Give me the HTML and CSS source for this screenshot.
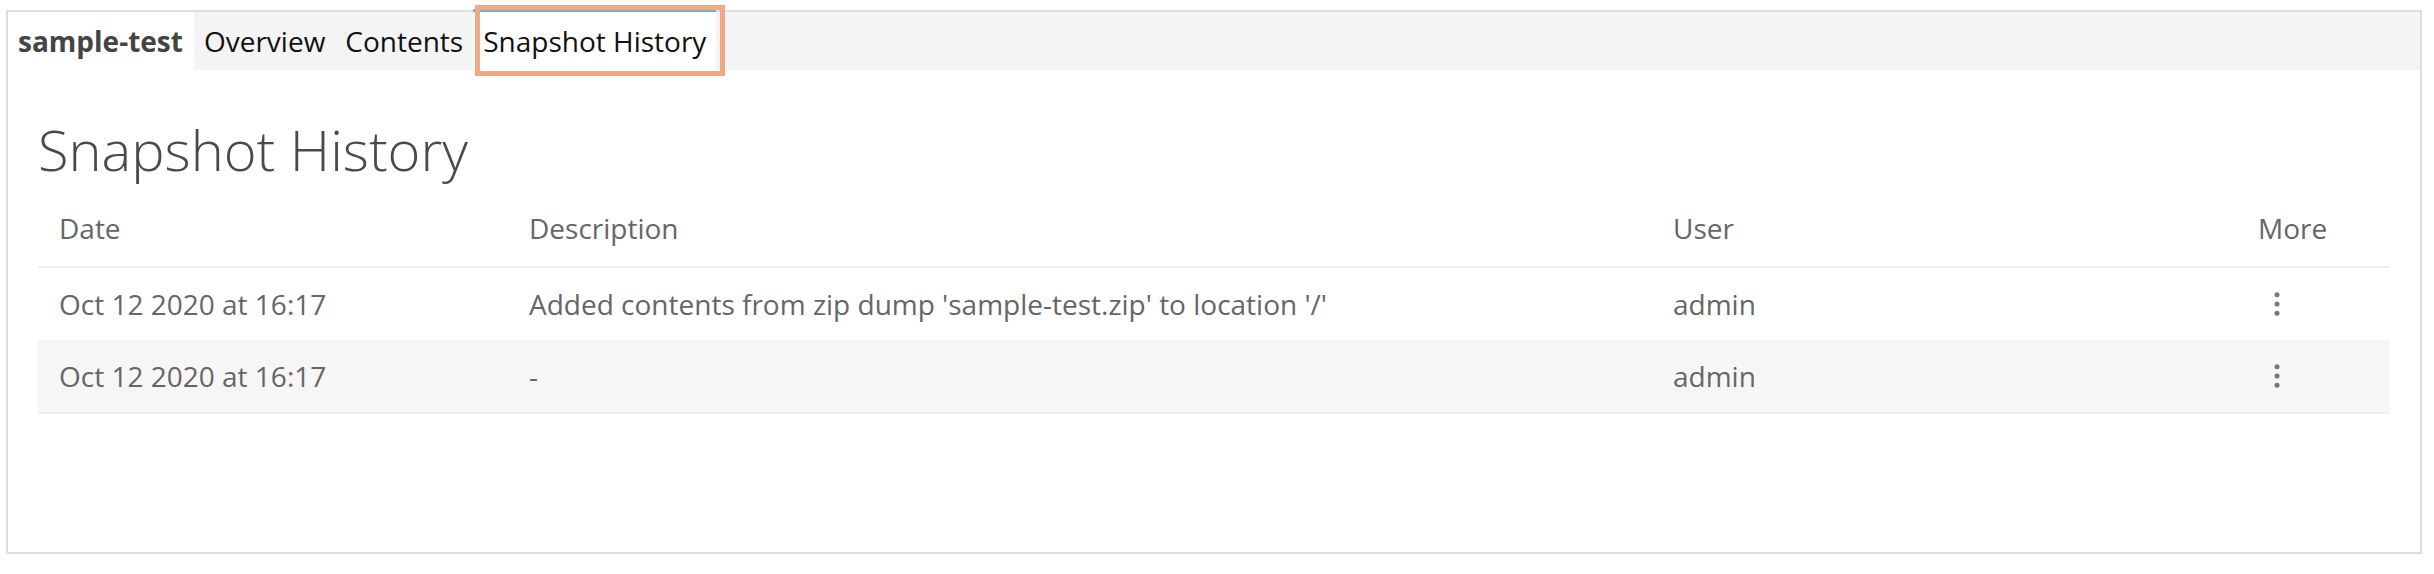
FILE: index.html
```html
<!DOCTYPE html>
<html lang="en">
<head>
<meta charset="utf-8">
<title>Snapshot History</title>
<link rel="stylesheet" href="styles.css">
</head>
<body>
<div class="panel">
  <div class="tabbar">
    <div class="brand">sample-test</div>
    <nav class="tabs">
      <a class="tab" href="#">Overview</a>
      <a class="tab" href="#">Contents</a>
      <a class="tab active" href="#">Snapshot History</a>
    </nav>
  </div>
  <div class="content">
    <h1 class="title">Snapshot History</h1>
    <table class="history">
      <colgroup>
        <col class="c-date">
        <col class="c-desc">
        <col class="c-user">
        <col class="c-more">
      </colgroup>
      <thead>
        <tr><th>Date</th><th>Description</th><th>User</th><th>More</th></tr>
      </thead>
      <tbody>
        <tr>
          <td>Oct 12 2020 at 16:17</td>
          <td>Added contents from zip dump 'sample-test.zip' to location '/'</td>
          <td>admin</td>
          <td><button class="kebab" type="button" aria-label="More"><svg width="38" height="24" viewBox="0 0 38 24"><circle cx="19" cy="2.7" r="2.5"/><circle cx="19" cy="12" r="2.5"/><circle cx="19" cy="21.3" r="2.5"/></svg></button></td>
        </tr>
        <tr>
          <td>Oct 12 2020 at 16:17</td>
          <td>-</td>
          <td>admin</td>
          <td><button class="kebab" type="button" aria-label="More"><svg width="38" height="24" viewBox="0 0 38 24"><circle cx="19" cy="2.7" r="2.5"/><circle cx="19" cy="12" r="2.5"/><circle cx="19" cy="21.3" r="2.5"/></svg></button></td>
        </tr>
      </tbody>
    </table>
  </div>
</div>
</body>
</html>
```

FILE: styles.css
```css
body {
  margin: 0;
  background: #fff;
  font-family: "Open Sans", "Liberation Sans", sans-serif;
}

.panel {
  margin: 10px 12px 0 6px;
  height: 544px;
  box-sizing: border-box;
  border: 2px solid #dddddd;
}

.tabbar {
  display: flex;
  height: 58px;
}

.brand {
  padding: 0 11px 0 10px;
  font-size: 28px;
  font-weight: 700;
  line-height: 58px;
  color: #444;
  background: #fff;
}

.tabs {
  flex: 1;
  display: flex;
  background: #f4f4f4;
}

.tab {
  padding: 0 10px;
  font-size: 28px;
  line-height: 58px;
  color: #111;
  text-decoration: none;
}

.tab.active {
  position: relative;
  margin-top: -3px;
  background: #fff;
  border-top: 3px solid #73b1c9;
}

.tab.active::after {
  content: "";
  position: absolute;
  top: -7px;
  left: 2px;
  right: -9px;
  bottom: -6px;
  border: 5px solid #f2a882;
}

.content {
  padding: 48px 30px 0;
}

.title {
  margin: 0;
  font-size: 56px;
  font-weight: 300;
  line-height: 62px;
  color: #4a4a4a;
}

.history {
  margin-top: 16px;
  width: 100%;
  border-collapse: collapse;
  table-layout: fixed;
  font-size: 28px;
  color: #666;
}

.c-date { width: 470px; }
.c-desc { width: 1144px; }
.c-user { width: 585px; }

.history th,
.history td {
  padding: 11px 21px 17px;
  height: 42px;
  line-height: 42px;
  text-align: left;
  font-weight: 400;
  white-space: nowrap;
  vertical-align: middle;
}

.history td {
  padding-top: 15px;
  padding-bottom: 15px;
}

.history thead th {
  border-bottom: 2px solid #efefef;
}

.history tbody tr:nth-child(even) {
  background: #f6f6f6;
}

.history tbody tr:last-child {
  border-bottom: 2px solid #efefef;
}

.kebab {
  display: block;
  height: 24px;
  padding: 0;
  border: 0;
  background: none;
  fill: #777;
}

.kebab svg {
  display: block;
}
```
